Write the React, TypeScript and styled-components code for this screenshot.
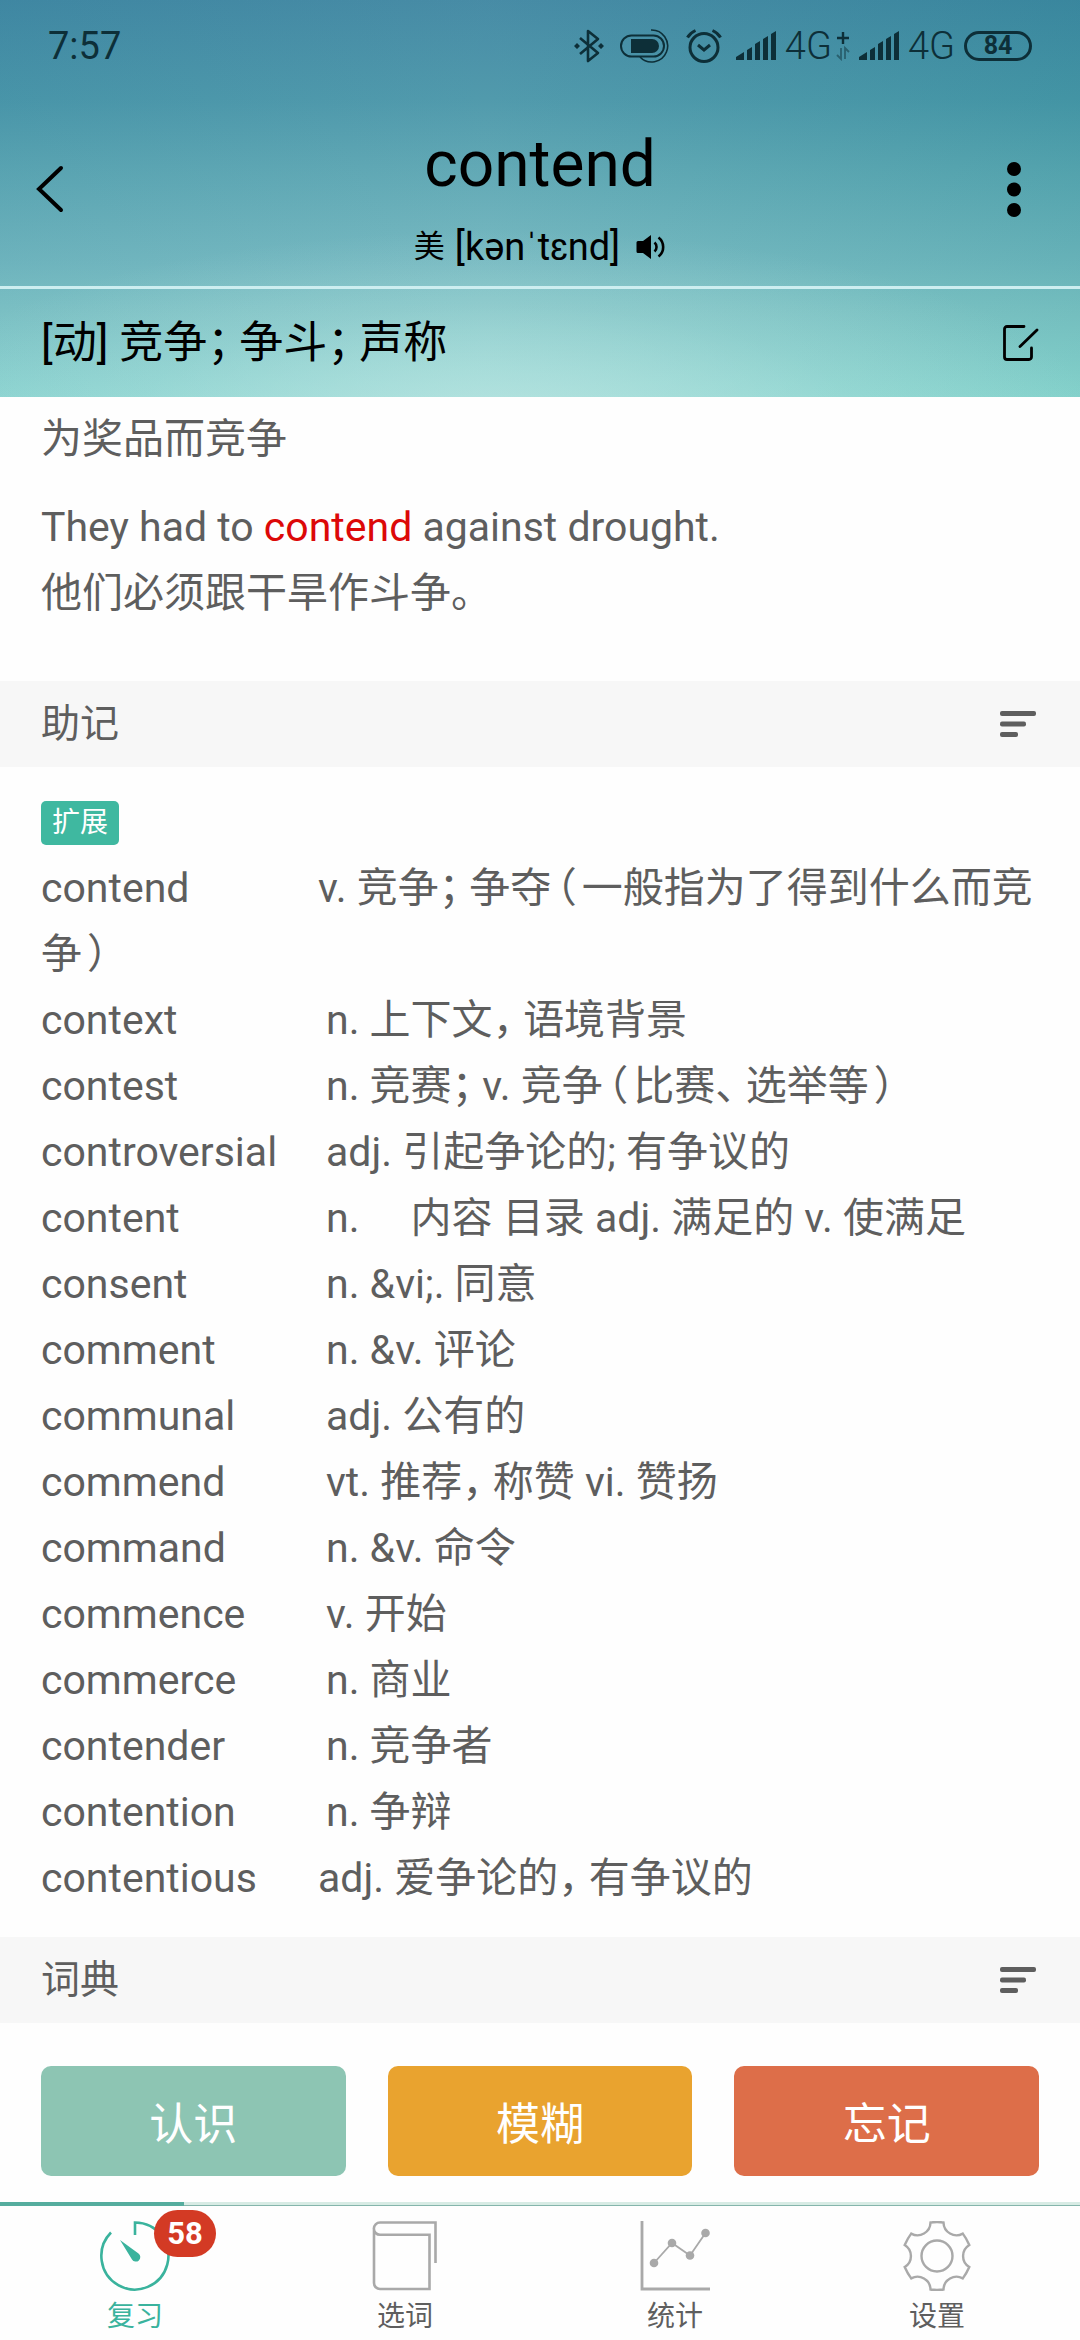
import React from "react";
import styled, { createGlobalStyle } from "styled-components";

const GlobalStyle = createGlobalStyle`
  * { box-sizing: border-box; }
  body {
    margin: 0;
    background: #fefefe;
    color: #5e5e5e;
    font-family: Roboto, "Noto Sans CJK SC", sans-serif;
  }
  button {
    padding: 0;
    border: 0;
    background: none;
    color: inherit;
    font: inherit;
    cursor: pointer;
  }
  svg { display: block; flex: none; }
  h1, h2, p { margin: 0; font-weight: 400; }
`;

const Screen = styled.div`
  display: flex;
  flex-direction: column;
  min-height: 100vh;
`;

const Header = styled.header`
  color: #000;
  background:
    radial-gradient(ellipse 56% 48% at 46% 106%, rgba(190, 228, 226, 0.75), rgba(190, 228, 226, 0.2) 60%, rgba(190, 228, 226, 0) 100%),
    linear-gradient(90deg, rgba(50, 130, 160, 0.08), rgba(255, 255, 255, 0.04) 45%, rgba(0, 130, 120, 0.1)),
    linear-gradient(180deg, #4087a2 0, #4a96a9 25%, #5ba5b2 42%, #72b7bf 66%, #80c4c6 78%, #92dad4 100%);
`;

const StatusBar = styled.div`
  display: flex;
  align-items: center;
  justify-content: space-between;
  height: 90px;
  padding: 2px 48px 0;
  color: #0d2f38;
  font-size: 38px;
`;

const StatusIcons = styled.div`
  display: flex;
  align-items: center;
  gap: 9px;
`;

const Network = styled.span`
  font-size: 38px;
  font-weight: 300;
`;

const IconGroup = styled.span`
  display: flex;
  align-items: center;
  gap: 16px;
  margin-right: 5px;
`;

const NetworkGroup = styled.span`
  display: flex;
  align-items: center;
  gap: 4px;
`;

const Battery = styled.span`
  display: flex;
  align-items: center;
  justify-content: center;
  width: 68px;
  height: 30px;
  border: 3px solid;
  border-radius: 15px;
  font-size: 25px;
  font-weight: 700;
  line-height: 24px;
`;

const TitleBar = styled.div`
  display: grid;
  grid-template-columns: 60px 1fr 60px;
  align-items: start;
  padding: 37px 36px 17px;
  border-bottom: 3px solid #cdeef0;
`;

const IconButton = styled.button<{ $align?: string }>`
  display: flex;
  align-items: center;
  justify-content: ${(p) => p.$align ?? "flex-start"};
  min-height: 44px;
`;

const BarButton = styled(IconButton)`
  height: 124px;
`;

const Heading = styled.div`
  display: flex;
  flex-direction: column;
  align-items: center;
  gap: 22px;
`;

const Word = styled.h1`
  font-size: 64px;
  line-height: 76px;
`;

const Phonetic = styled.div`
  display: flex;
  align-items: center;
  gap: 16px;
  font-size: 38px;
  line-height: 44px;
`;

const Reading = styled.span`
  display: flex;
  align-items: center;
  gap: 10px;
`;

const Region = styled.span`
  font-size: 31px;
`;

const Definition = styled.div`
  display: flex;
  align-items: center;
  justify-content: space-between;
  height: 108px;
  padding: 0 41px;
  font-size: 44px;
  line-height: 66px;
`;

const Content = styled.main`
  flex: 1;
  font-size: 41px;
  line-height: 66px;
`;

const Examples = styled.section`
  display: flex;
  flex-direction: column;
  gap: 22px;
  padding: 9px 41px 55px;
`;

const Highlight = styled.em`
  color: #dc0808;
  font-style: normal;
`;

const SectionBar = styled.div`
  display: flex;
  align-items: center;
  justify-content: space-between;
  height: 86px;
  padding: 0 44px 0 41px;
  background: #f7f7f7;
`;

const SectionTitle = styled.h2`
  font-size: 39px;
`;

const Notes = styled.section`
  padding: 34px 41px 26px;
`;

const Tag = styled.span`
  display: block;
  width: max-content;
  margin-bottom: 10px;
  padding: 0 11px;
  border-radius: 5px;
  background: #3fb8a0;
  color: #fff;
  font-size: 28px;
  line-height: 44px;
`;

const Term = styled.span<{ $narrow?: boolean }>`
  display: inline-block;
  min-width: ${(p) => (p.$narrow ? 277 : 285)}px;
`;

const Mark = styled.span<{ $bracket?: boolean }>`
  margin: ${(p) => (p.$bracket ? "0 5px" : "0 10px 0 0")};
  font-family: "Noto Sans CJK SC", sans-serif;
  font-feature-settings: "halt";
  line-height: 1;
`;

const Actions = styled.div`
  display: grid;
  grid-template-columns: repeat(3, 1fr);
  gap: 42px;
  padding: 43px 41px 26px;
`;

const ActionButton = styled.button<{ $color: string }>`
  height: 110px;
  border-radius: 10px;
  background: ${(p) => p.$color};
  color: #fff;
  font-size: 44px;
`;

const Progress = styled.div`
  height: 4px;
  border-bottom: 1px solid #84b5ab;
  background: #d7ebe4;
`;

const ProgressFill = styled.div`
  width: 17%;
  height: 4px;
  background: #55ad9e;
`;

const TabBar = styled.nav`
  display: grid;
  grid-template-columns: repeat(4, 1fr);
`;

const Tab = styled.button<{ $active?: boolean }>`
  display: flex;
  flex-direction: column;
  align-items: center;
  gap: 10px;
  padding: 15px 0 7px;
  color: ${(p) => (p.$active ? "#3ab39d" : "#5e5e5e")};
  font-size: 28px;
  line-height: 32px;

  &:last-child { padding-right: 16px; }
  svg { color: ${(p) => (p.$active ? "#3ab39d" : "#a9a9a9")}; }
`;

const TabIcon = styled.span`
  position: relative;
`;

const Badge = styled.span`
  position: absolute;
  top: -11px;
  left: 54px;
  width: 62px;
  border-radius: 24px;
  background: #d33a24;
  color: #fff;
  font-size: 31px;
  font-weight: 700;
  line-height: 47px;
  text-align: center;
`;

/* Full-width punctuation is set narrower than a whole character. */
function Zh({ children }: { children: string }) {
  return (
    <>
      {children.split(/([；，、（）。])/).map((part, i) =>
        i % 2 ? (
          <Mark key={i} $bracket={part === "（" || part === "）"}>
            {part}
          </Mark>
        ) : (
          part
        )
      )}
    </>
  );
}

const BluetoothIcon = () => (
  <svg width="30" height="34" viewBox="0 0 30 34" fill="none" stroke="currentColor" strokeWidth="2.6">
    <path d="M6 9l18 15-10 8V2l10 8L6 25" strokeLinejoin="round" />
    <path d="M3 14l3 3-3 3-3-3zM27 14l3 3-3 3-3-3z" fill="currentColor" stroke="none" />
  </svg>
);

const FloatIcon = () => (
  <svg width="50" height="34" viewBox="0 0 50 34" fill="none" stroke="currentColor">
    <rect x="1" y="6.500" width="43" height="21" rx="10.500" strokeWidth="2" />
    <path d="M11 10h21a7 7 0 0 1 0 14H11z" fill="currentColor" stroke="none" />
    <path d="M31 1a16 16 0 1 1-11 27" strokeWidth="1.600" />
  </svg>
);

const AlarmIcon = () => (
  <svg width="36" height="34" viewBox="0 0 36 34" fill="none" stroke="currentColor" strokeWidth="3">
    <circle cx="18" cy="18.500" r="14" />
    <path d="M12 16l6 5 6-5M1.500 8.500Q4 4 9.500 1.500M34.500 8.500Q32 4 26.500 1.500" />
  </svg>
);

const SignalIcon = () => (
  <svg width="40" height="30" viewBox="0 0 40 30" fill="currentColor">
    <path d="M0 26l8-5v8H0zM11 19l5-3v13h-5zM19 13l5-3v19h-5zM27 8l5-3v24h-5zM35 3l5-3v29h-5z" />
  </svg>
);

const PlusDataIcon = () => (
  <svg width="14" height="30" viewBox="0 0 14 30" fill="none" stroke="currentColor">
    <path d="M7 1v12M1 7h12" strokeWidth="2.400" />
    <path d="M5 17v11l-4-4M9 28V17l4 4" strokeWidth="1.800" opacity="0.5" />
  </svg>
);

const BackIcon = () => (
  <svg width="28" height="48" viewBox="0 0 28 48" fill="none" stroke="currentColor" strokeWidth="4" strokeLinecap="round">
    <path d="M25 3L3 24l22 21" />
  </svg>
);

const MoreIcon = () => (
  <svg width="14" height="56" viewBox="0 0 14 56" fill="currentColor">
    <circle cx="7" cy="8" r="7" />
    <circle cx="7" cy="28.500" r="7" />
    <circle cx="7" cy="49" r="7" />
  </svg>
);

const SpeakerIcon = () => (
  <svg width="30" height="24" viewBox="0 0 30 24" fill="none" stroke="currentColor" strokeWidth="2.600">
    <path d="M2 6h5l8-6v24l-8-6H2a1.500 1.500 0 0 1-1.500-1.500v-9A1.500 1.500 0 0 1 2 6z" fill="currentColor" stroke="none" />
    <path d="M18.500 7.500a6 6 0 0 1 0 9M22.500 2.500a12 12 0 0 1 0 19" />
  </svg>
);

const EditIcon = () => (
  <svg width="36" height="36" viewBox="0 0 36 36" fill="none" stroke="currentColor" strokeWidth="2.800" strokeLinecap="round">
    <path d="M21 1.500H4A2.500 2.500 0 0 0 1.500 4v28A2.500 2.500 0 0 0 4 34.500h22a2.500 2.500 0 0 0 2.500-2.500V23M17 21.500L34 5" />
  </svg>
);

const BarsIcon = () => (
  <svg width="36" height="27" viewBox="0 0 36 27" fill="currentColor">
    <rect width="36" height="5" rx="2" />
    <rect y="10.500" width="26" height="5" rx="2" />
    <rect y="21" width="18" height="5" rx="2" />
  </svg>
);

const TimerIcon = () => (
  <svg width="70" height="70" viewBox="0 0 70 70" fill="none" stroke="currentColor" strokeWidth="2.600">
    <path d="M35 14V1.500A33.500 33.500 0 1 1 11 11.500" />
    <path d="M20 19l18.500 13.500a4.500 4.500 0 1 1-6.500 6z" fill="currentColor" stroke="none" />
  </svg>
);

const BookIcon = () => (
  <svg width="70" height="70" viewBox="0 0 70 70" fill="none" stroke="currentColor" strokeWidth="2.600">
    <path d="M65.500 42V1.500H10a6 6 0 0 0 0 12.300H59.500V68H10a6 6 0 0 1-6-6V8" />
  </svg>
);

const ChartIcon = () => (
  <svg width="70" height="70" viewBox="0 0 70 70" fill="none" stroke="currentColor">
    <path d="M2 0v68h68" strokeWidth="2.800" />
    <path d="M14 42l18-20 18 12.500L65.500 12" strokeWidth="1.800" />
    <g fill="currentColor" stroke="none">
      <circle cx="14" cy="42" r="4.300" />
      <circle cx="32" cy="22" r="4.300" />
      <circle cx="50" cy="34.500" r="4.300" />
      <circle cx="65.500" cy="12" r="4.300" />
    </g>
  </svg>
);

const GearIcon = () => (
  <svg width="70" height="70" viewBox="-35 -35 70 70" fill="none" stroke="currentColor" strokeWidth="2.400">
    <path d="M-6.500-33.500Q0-34.500 6.500-33.500A13 13 0 0 0 25.800-22.400Q29.500-17.500 32.300-11.100A13 13 0 0 0 32.300 11.100Q29.500 17.500 25.800 22.400A13 13 0 0 0 6.500 33.500Q0 34.500-6.500 33.500A13 13 0 0 0-25.800 22.400Q-29.500 17.500-32.300 11.100A13 13 0 0 0-32.300-11.100Q-29.500-17.500-25.800-22.400A13 13 0 0 0-6.500-33.500z" />
    <circle r="15.500" />
  </svg>
);

const entries: { term: string; text: string; narrow?: boolean }[] = [
  { term: "contend", text: "v. 竞争；争夺（一般指为了得到什么而竞争）", narrow: true },
  { term: "context", text: "n. 上下文，语境背景" },
  { term: "contest", text: "n. 竞赛；v. 竞争（比赛、选举等）" },
  { term: "controversial", text: "adj. 引起争论的; 有争议的" },
  { term: "content", text: "n. \u3000内容 目录 adj. 满足的 v. 使满足" },
  { term: "consent", text: "n. &vi;. 同意" },
  { term: "comment", text: "n. &v. 评论" },
  { term: "communal", text: "adj. 公有的" },
  { term: "commend", text: "vt. 推荐，称赞 vi. 赞扬" },
  { term: "command", text: "n. &v. 命令" },
  { term: "commence", text: "v. 开始" },
  { term: "commerce", text: "n. 商业" },
  { term: "contender", text: "n. 竞争者" },
  { term: "contention", text: "n. 争辩" },
  { term: "contentious", text: "adj. 爱争论的，有争议的", narrow: true },
];

const actions = [
  { label: "认识", color: "#8dc5b3" },
  { label: "模糊", color: "#e9a32f" },
  { label: "忘记", color: "#dd6e49" },
];

const tabs = [
  { label: "复习", Icon: TimerIcon, badge: 58 },
  { label: "选词", Icon: BookIcon },
  { label: "统计", Icon: ChartIcon },
  { label: "设置", Icon: GearIcon },
];

function Section({ title }: { title: string }) {
  return (
    <SectionBar>
      <SectionTitle>{title}</SectionTitle>
      <IconButton aria-label={`${title}选项`} $align="flex-end">
        <BarsIcon />
      </IconButton>
    </SectionBar>
  );
}

export default function App() {
  return (
    <Screen>
      <GlobalStyle />
      <Header>
        <StatusBar>
          <span>7:57</span>
          <StatusIcons>
            <IconGroup>
              <BluetoothIcon />
              <FloatIcon />
              <AlarmIcon />
            </IconGroup>
            <SignalIcon />
            <NetworkGroup>
              <Network>4G</Network>
              <PlusDataIcon />
            </NetworkGroup>
            <SignalIcon />
            <Network>4G</Network>
            <Battery>84</Battery>
          </StatusIcons>
        </StatusBar>
        <TitleBar>
          <BarButton aria-label="返回">
            <BackIcon />
          </BarButton>
          <Heading>
            <Word>contend</Word>
            <Phonetic>
              <Reading>
                <Region>美</Region>
                <span>[kənˈtɛnd]</span>
              </Reading>
              <IconButton aria-label="发音">
                <SpeakerIcon />
              </IconButton>
            </Phonetic>
          </Heading>
          <BarButton aria-label="更多" $align="center">
            <MoreIcon />
          </BarButton>
        </TitleBar>
        <Definition>
          <p>
            <Zh>[动] 竞争；争斗；声称</Zh>
          </p>
          <IconButton aria-label="编辑" $align="flex-end">
            <EditIcon />
          </IconButton>
        </Definition>
      </Header>

      <Content>
        <Examples>
          <p>为奖品而竞争</p>
          <div>
            <p>
              They had to <Highlight>contend</Highlight> against drought.
            </p>
            <p>
              <Zh>他们必须跟干旱作斗争。</Zh>
            </p>
          </div>
        </Examples>
        <Section title="助记" />
        <Notes>
          <Tag>扩展</Tag>
          {entries.map(({ term, text, narrow }) => (
            <p key={term}>
              <Term $narrow={narrow}>{term}</Term>
              <Zh>{text}</Zh>
            </p>
          ))}
        </Notes>
        <Section title="词典" />
      </Content>

      <Actions>
        {actions.map(({ label, color }) => (
          <ActionButton key={label} $color={color}>
            {label}
          </ActionButton>
        ))}
      </Actions>
      <Progress>
        <ProgressFill />
      </Progress>
      <TabBar>
        {tabs.map(({ label, Icon, badge }, i) => (
          <Tab key={label} $active={i === 0}>
            <TabIcon>
              <Icon />
              {badge && <Badge>{badge}</Badge>}
            </TabIcon>
            {label}
          </Tab>
        ))}
      </TabBar>
    </Screen>
  );
}
